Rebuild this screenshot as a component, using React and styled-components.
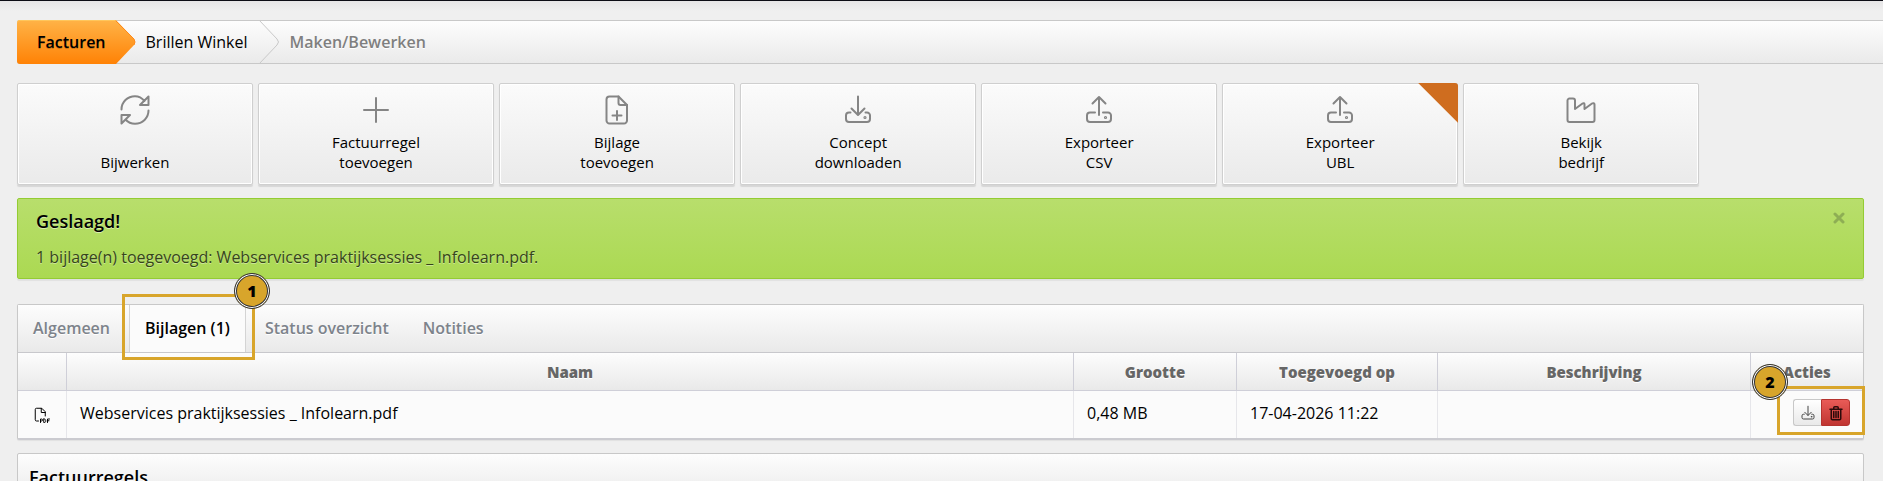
import React from "react";
import styled, { createGlobalStyle, css } from "styled-components";

const actions = [
  { icon: "refresh", lines: ["Bijwerken"] },
  { icon: "plus", lines: ["Factuurregel", "toevoegen"] },
  { icon: "filePlus", lines: ["Bijlage", "toevoegen"] },
  { icon: "download", lines: ["Concept", "downloaden"] },
  { icon: "upload", lines: ["Exporteer", "CSV"] },
  { icon: "upload", lines: ["Exporteer", "UBL"], flagged: true },
  { icon: "factory", lines: ["Bekijk", "bedrijf"] },
];

const tabs = ["Algemeen", "Bijlagen (1)", "Status overzicht", "Notities"];

const attachments = [
  {
    name: "Webservices praktijksessies _ Infolearn.pdf",
    size: "0,48 MB",
    added: "17-04-2026 11:22",
    description: "",
  },
];

const iconPaths = {
  refresh: (
    <>
      <path d="M2.5 15.5C2.500 8 8.500 2.200 16 2.200c4 0 7 1.800 9.500 4.800M29.500 2.500V11H21z" />
      <path d="M29.500 16.500C29.500 24 23.500 29.800 16 29.800c-4 0-7-1.500-9.500-4.300M2.500 29.500V21H11z" />
    </>
  ),
  plus: <path d="M16 4v24M4 16h24" />,
  filePlus: (
    <>
      <path d="M17.5 2.500H8.500a3 3 0 0 0-3 3v21a3 3 0 0 0 3 3h14.500a3 3 0 0 0 3-3V11z" />
      <path d="M17.500 2.500V9a2 2 0 0 0 2 2H26M16 17v9M11.500 21.500h9" />
    </>
  ),
  download: (
    <>
      <path d="M16 2.500v18M9.500 14.500l6.500 6.500 6.500-6.500" />
      <path d="M8.500 18.500H7a3 3 0 0 0-3 3V25a3 3 0 0 0 3 3h18a3 3 0 0 0 3-3v-3.500a3 3 0 0 0-3-3h-1.500" />
      <circle cx="23" cy="23.500" r="0.600" />
    </>
  ),
  upload: (
    <>
      <path d="M16 21V3M9.500 9.500L16 3l6.500 6.500" />
      <path d="M12 18.500H7a3 3 0 0 0-3 3V25a3 3 0 0 0 3 3h18a3 3 0 0 0 3-3v-3.500a3 3 0 0 0-3-3h-5" />
      <circle cx="22.500" cy="23.500" r="0.600" />
    </>
  ),
  factory: (
    <path d="M2.500 6.500a2 2 0 0 1 2-2h3.500a2 2 0 0 1 2 2v8.500l7.500-5.500c1-.7 2-.3 2 1V15l7.500-5.500c1-.7 2.500-.3 2.500 1V26a2 2 0 0 1-2 2h-23a2 2 0 0 1-2-2z" />
  ),
  pdf: (
    <>
      <path d="M9 28H5a2.500 2.500 0 0 1-2.500-2.500V5A2.500 2.500 0 0 1 5 2.500h10.500l7 7V18" />
      <path d="M14.500 3v8h8" />
      <path d="M13 31v-7h2a2 2 0 0 1 0 4h-2M19.500 24v7h1.500c3.500 0 3.500-7 0-7zM27 31v-7h4M27 27.500h3" />
    </>
  ),
  trash: (
    <>
      <path d="M4 8.500h24M11.500 8V5.500a2 2 0 0 1 2-2h5a2 2 0 0 1 2 2V8" />
      <path d="M6.500 9v18a2.500 2.500 0 0 0 2.500 2.500h14a2.500 2.500 0 0 0 2.500-2.500V9M11.500 13v12M16 13v12M20.500 13v12" />
    </>
  ),
};

const Icon = ({ name, size = 32, stroke = 2 }) => (
  <svg
    width={size}
    height={size}
    viewBox="0 0 32 32"
    fill="none"
    stroke="currentColor"
    strokeWidth={stroke}
    strokeLinecap="round"
    strokeLinejoin="round"
    aria-hidden="true"
  >
    {iconPaths[name]}
  </svg>
);

const App = () => {
  return (
    <>
      <GlobalStyle />
      <Page>
        <Breadcrumb aria-label="Kruimelpad">
          <CrumbActive href="#facturen">
            Facturen
            <OrangeArrow viewBox="0 0 21 44" aria-hidden="true">
              <defs>
                <linearGradient id="crumb" x1="0" y1="0" x2="0" y2="1">
                  <stop offset="0" stopColor="#ffb347" />
                  <stop offset="1" stopColor="#ff8205" />
                </linearGradient>
              </defs>
              <path d="M0 0h1l18 19q2 3 0 6L1 44H0z" fill="url(#crumb)" />
              <path d="M1 1l18 18q2 3 0 6" fill="none" stroke="#ff8a1a" />
            </OrangeArrow>
          </CrumbActive>
          <Crumb href="#brillen-winkel">Brillen Winkel</Crumb>
          <Separator viewBox="0 0 21 44" aria-hidden="true">
            <path d="M0 0l18 19q3 3 0 6L0 44" />
          </Separator>
          <CrumbCurrent>Maken/Bewerken</CrumbCurrent>
        </Breadcrumb>

        <Actions>
          {actions.map((action) => (
            <ActionButton key={action.lines.join(" ")} type="button">
              <Icon name={action.icon} />
              <ActionLabel>
                {action.lines.map((line) => (
                  <span key={line}>{line}</span>
                ))}
              </ActionLabel>
              {action.flagged && <Flag />}
            </ActionButton>
          ))}
        </Actions>

        <Alert role="status">
          <AlertTitle>Geslaagd!</AlertTitle>
          <AlertText>
            1 bijlage(n) toegevoegd: Webservices praktijksessies _ Infolearn.pdf.
          </AlertText>
          <CloseButton type="button" aria-label="Sluiten">
            <svg width="12" height="12" viewBox="0 0 12 12" aria-hidden="true">
              <path d="M2 2l8 8M10 2l-8 8" stroke="currentColor" strokeWidth="3" strokeLinecap="round" />
            </svg>
          </CloseButton>
        </Alert>

        <Panel>
          <Tabs role="tablist">
            {tabs.map((tab, i) => (
              <Tab key={tab} type="button" role="tab" aria-selected={i === 1} $active={i === 1}>
                {tab}
                {i === 1 && (
                  <TabHighlight>
                    <Marker>1</Marker>
                  </TabHighlight>
                )}
              </Tab>
            ))}
          </Tabs>
          <Table>
            <colgroup>
              <Col $width="48px" />
              <Col />
              <Col $width="163px" />
              <Col $width="201px" />
              <Col $width="313px" />
              <Col $width="113px" />
            </colgroup>
            <thead>
              <tr>
                <Th />
                <Th>Naam</Th>
                <Th>Grootte</Th>
                <Th>Toegevoegd op</Th>
                <Th>Beschrijving</Th>
                <Th>Acties</Th>
              </tr>
            </thead>
            <tbody>
              {attachments.map((file) => (
                <tr key={file.name}>
                  <IconCell>
                    <Icon name="pdf" size={16} />
                  </IconCell>
                  <Td>{file.name}</Td>
                  <Td>{file.size}</Td>
                  <Td>{file.added}</Td>
                  <Td>{file.description}</Td>
                  <Td>
                    <RowActions>
                      <RowButton type="button" aria-label="Downloaden">
                        <Icon name="download" size={16} />
                      </RowButton>
                      <RowButton type="button" aria-label="Verwijderen" $danger>
                        <Icon name="trash" size={16} stroke={3} />
                      </RowButton>
                      <ActionsHighlight>
                        <Marker>2</Marker>
                      </ActionsHighlight>
                    </RowActions>
                  </Td>
                </tr>
              ))}
            </tbody>
          </Table>
        </Panel>

        <Section>
          <SectionTitle>Factuurregels</SectionTitle>
        </Section>
      </Page>
    </>
  );
};

const GlobalStyle = createGlobalStyle`
  * {
    box-sizing: border-box;
  }
  html {
    background: #efefef;
  }
  body {
    margin: 0;
    overflow: hidden;
    font-family: "Open Sans", sans-serif;
    font-size: 16px;
    color: #000;
  }
  button {
    font: inherit;
    color: inherit;
    cursor: pointer;
  }
`;

const Page = styled.main`
  padding: 19px 19px 0 17px;
  border-top: 1px solid #0c0c14;
  background: linear-gradient(#e6e5e6, #efefef 10px);
`;

const Breadcrumb = styled.nav`
  display: flex;
  height: 44px;
  margin-right: -19px;
  border: 1px solid #c8c8c8;
  border-right: 0;
  border-radius: 3px 0 0 3px;
  background: linear-gradient(#fdfdfd, #eaeaea);
  line-height: 36px;
`;
const CrumbActive = styled.a`
  position: relative;
  margin: -1px 0 -1px -1px;
  padding: 4px 9px 4px 20px;
  border-radius: 3px 0 0 3px;
  background: linear-gradient(#ffb347, #ff8205);
  box-shadow: inset 0 1px #ffc65c;
  color: #000;
  font-weight: 600;
  text-decoration: none;
  text-shadow: 0 1px rgba(0, 0, 0, 0.2);
`;
const OrangeArrow = styled.svg`
  position: absolute;
  top: 0;
  left: 100%;
  width: 21px;
  height: 44px;
`;
const Crumb = styled.a`
  padding: 3px 11px 3px 31px;
  color: #000;
  text-decoration: none;
`;
const Separator = styled.svg`
  width: 21px;
  height: 44px;
  margin-top: -1px;
  fill: none;
  stroke: #c8c8c8;
`;
const CrumbCurrent = styled.span`
  padding: 3px 10px;
  color: #7f7f7f;
  font-weight: 600;
  text-shadow: 0 1px #fff;
`;

const Actions = styled.div`
  display: grid;
  grid-template-columns: repeat(7, 12.78%);
  gap: 5px;
  margin-top: 19px;
`;
const ActionButton = styled.button`
  position: relative;
  display: flex;
  flex-direction: column;
  align-items: center;
  height: 102px;
  padding: 10px 8px 12px;
  border: 1px solid #cfcfcf;
  border-radius: 2px;
  background: linear-gradient(#fbfbfb, #eaeaea);
  box-shadow: inset 0 0 0 1px #fff, 0 2px 1px rgba(0, 0, 0, 0.1);
  font-size: 15px;
  line-height: 20px;

  svg {
    color: #858585;
  }
`;
const ActionLabel = styled.span`
  display: flex;
  flex-direction: column;
  margin-top: auto;
`;
const Flag = styled.span`
  position: absolute;
  top: -1px;
  right: -1px;
  width: 40px;
  height: 40px;
  border-top-right-radius: 3px;
  background: #cf6d1f;
  clip-path: polygon(0 0, 100% 0, 100% 100%);
`;

const Alert = styled.div`
  position: relative;
  margin-top: 13px;
  padding: 10px 18px;
  border: 1px solid #94cc33;
  border-radius: 2px;
  background: linear-gradient(#b8de6c, #abd952);
  box-shadow: 0 2px 1px rgba(0, 0, 0, 0.06);
`;
const AlertTitle = styled.h4`
  margin: 0;
  font-size: 18px;
  font-weight: 600;
  line-height: 25px;
  text-shadow: 0 1px rgba(255, 255, 255, 0.5);
`;
const AlertText = styled.p`
  margin: 12px 0 0;
  color: #36451a;
  line-height: 22px;
  text-shadow: 0 1px rgba(255, 255, 255, 0.4);
`;
const CloseButton = styled.button`
  position: absolute;
  top: 13px;
  right: 18px;
  display: flex;
  padding: 0;
  border: 0;
  background: none;
  color: #8eae54;
`;

const panel = css`
  border: 1px solid #c8c8c8;
  border-radius: 2px;
`;
const Panel = styled.section`
  ${panel}
  margin-top: 25px;
  border-bottom: 2px solid #cbcbd0;
  background: #fbfbfb;
  box-shadow: 0 1px 1px rgba(0, 0, 0, 0.06);
`;
const Tabs = styled.div`
  display: flex;
  gap: 4px;
  height: 48px;
  border-bottom: 1px solid #c8c8cc;
  background: linear-gradient(#fdfdfd, #e9e9e9);
`;
const Tab = styled.button`
  position: relative;
  padding: 0 15px 2px;
  border: 0;
  background: none;
  color: #7d838b;
  font-weight: 600;
  text-shadow: 0 1px #fff;

  ${({ $active }) =>
    $active &&
    css`
      border: solid #d4d4d4;
      border-width: 0 1px;
      background: #fbfbfb;
      color: #000;
    `}
`;

const highlight = css`
  position: absolute;
  border: 3px solid #d8a52b;
  pointer-events: none;
`;
const Marker = styled.span`
  position: absolute;
  width: 36px;
  height: 36px;
  border: 1px solid #333;
  border-radius: 50%;
  background: #d8a52b;
  box-shadow: inset 0 0 0 1px #fff, inset 0 0 0 2px #333;
  color: #000;
  font-size: 16px;
  font-weight: 800;
  line-height: 34px;
  text-align: center;
  text-shadow: none;
`;
const TabHighlight = styled.span`
  ${highlight}
  top: -11px;
  right: -10px;
  bottom: -8px;
  left: -8px;

  ${Marker} {
    top: -24px;
    right: -18px;
  }
`;

const Table = styled.table`
  width: 100%;
  table-layout: fixed;
  border-collapse: separate;
  border-spacing: 0;
`;
const Col = styled.col`
  width: ${({ $width }) => $width || "auto"};
`;
const Th = styled.th`
  height: 38px;
  padding: 0;
  border-bottom: 1px solid #cfcfd8;
  background: linear-gradient(#fdfdfd, #e9e9e9);
  color: #666;
  font-size: 15px;
  font-weight: 800;
  text-shadow: 0 1px #fff;

  & + & {
    border-left: 1px solid #cfcfd8;
  }
`;
const Td = styled.td`
  height: 47px;
  padding: 0 13px 4px;
  border-left: 1px solid #e6e6ea;
`;
const IconCell = styled.td`
  padding: 0 8px 0 16px;

  svg {
    display: block;
  }
`;
const RowActions = styled.div`
  position: relative;
  display: flex;
  width: 57px;
  margin-left: auto;
`;
const RowButton = styled.button`
  display: flex;
  align-items: center;
  justify-content: center;
  flex: 1;
  height: 27px;
  padding: 0;
  border: 1px solid #c8c8c8;
  border-right: 0;
  border-radius: 3px 0 0 3px;
  background: linear-gradient(#fff, #e9e9e9);
  color: #444;

  ${({ $danger }) =>
    $danger &&
    css`
      border: 1px solid #b5332f;
      border-radius: 0 3px 3px 0;
      background: linear-gradient(#e95b57, #c03531);
      color: #2b0a0a;
    `}
`;
const ActionsHighlight = styled.span`
  ${highlight}
  top: -13px;
  right: -15px;
  bottom: -9px;
  left: -16px;

  ${Marker} {
    top: -25px;
    left: -28px;
  }
`;

const Section = styled.section`
  ${panel}
  margin-top: 13px;
  background: linear-gradient(#fdfdfd, #e9e9e9);
`;
const SectionTitle = styled.h3`
  margin: 0;
  padding: 11px;
  font-size: 18px;
  font-weight: 600;
  line-height: 25px;
  text-shadow: 0 1px #fff;
`;

export default App;
